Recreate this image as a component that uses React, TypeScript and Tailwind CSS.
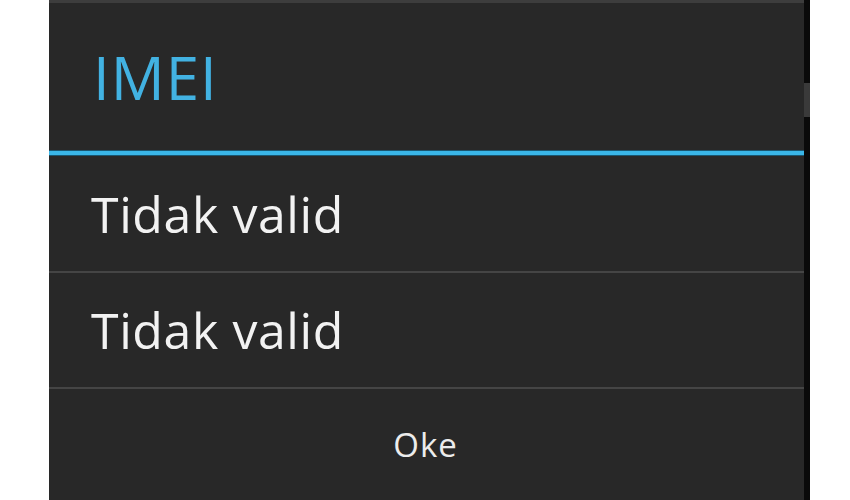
import React from "react";

export default function App() {
  const font = { fontFamily: '"Open Sans", "Noto Sans", sans-serif' };
  return (
    <div className="w-[850px] h-[500px] bg-white flex overflow-hidden" style={font}>
      <div className="ml-[49px] flex h-full">
        <div className="w-[755px] h-full bg-[#282828] flex flex-col">
          <div className="h-[3px] bg-[#3d3d3d]" />
          <div className="h-[147px] flex items-center pl-[44px]">
            <span className="text-[60px] leading-none text-[#42b2e2] tracking-[1px]">IMEI</span>
          </div>
          <div className="h-[6px] bg-[#3ab6e8] border-y border-[#1a5670]" />
          <div className="h-[115px] flex items-center pl-[42px]">
            <span className="text-[50px] leading-none text-[#f2f2f2] font-medium tracking-[0.6px]">Tidak valid</span>
          </div>
          <div className="h-[2px] bg-[#454545]" />
          <div className="h-[114px] flex items-center pl-[42px]">
            <span className="text-[50px] leading-none text-[#f2f2f2] font-medium tracking-[0.6px]">Tidak valid</span>
          </div>
          <div className="h-[2px] bg-[#454545]" />
          <div className="flex-1 flex items-center justify-center pr-[2px]">
            <span className="text-[33px] leading-none text-[#ececec] tracking-[1px]">Oke</span>
          </div>
        </div>
        <div className="w-[6px] h-full bg-[#0a0a0a] flex flex-col">
          <div className="h-[83px]" />
          <div className="h-[34px] bg-[#3a3a3a]" />
        </div>
      </div>
    </div>
  );
}
